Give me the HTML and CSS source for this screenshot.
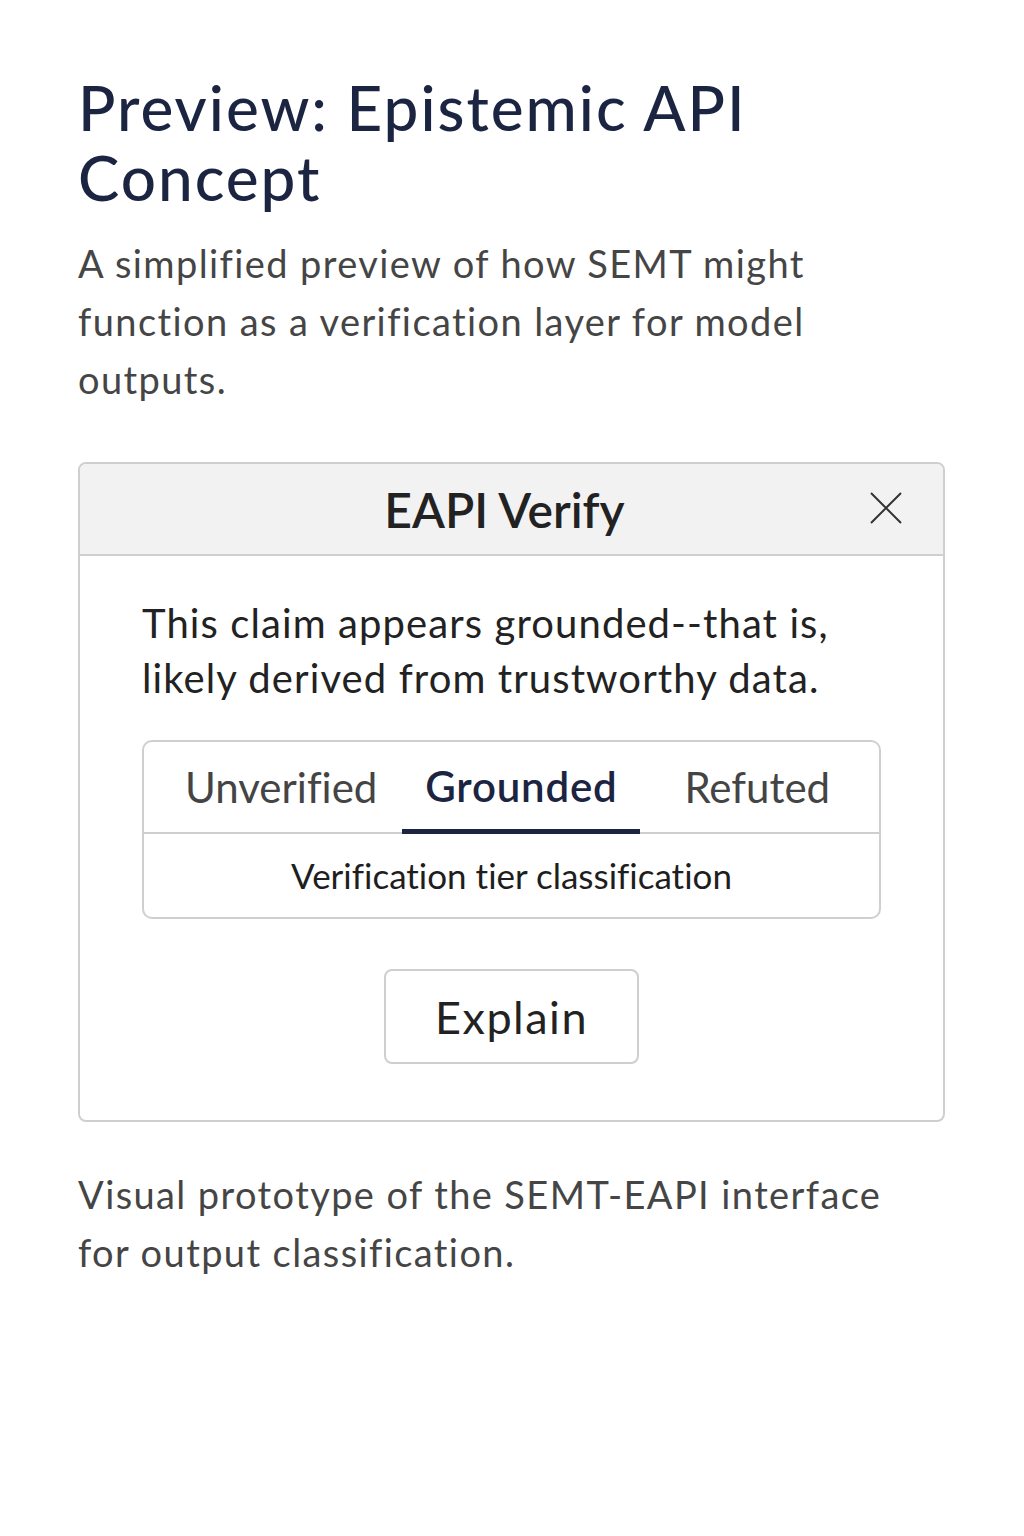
FILE: index.html
```html
<!DOCTYPE html>
<html lang="en">
<head>
<meta charset="utf-8">
<title>Preview: Epistemic API Concept</title>
<link rel="stylesheet" href="styles.css">
</head>
<body>
<main class="page">
  <h1 class="title">Preview: Epistemic API Concept</h1>
  <p class="lead">A simplified preview of how SEMT might function as a verification layer for model outputs.</p>

  <section class="card">
    <header class="card-header">
      <h2 class="card-title">EAPI Verify</h2>
      <button class="close" aria-label="Close">
        <svg width="34" height="34" viewBox="0 0 34 34"><path d="M2 2 L32 32 M32 2 L2 32" stroke="#333" stroke-width="2" fill="none"/></svg>
      </button>
    </header>
    <div class="card-body">
      <p class="claim">This claim appears grounded--that is, likely derived from trustworthy data.</p>
      <div class="tiers">
        <div class="tabs">
          <span class="tab">Unverified</span>
          <span class="tab active">Grounded</span>
          <span class="tab">Refuted</span>
        </div>
        <div class="tier-caption">Verification tier classification</div>
      </div>
      <div class="actions">
        <button class="btn">Explain</button>
      </div>
    </div>
  </section>

  <p class="footnote">Visual prototype of the SEMT-EAPI interface for output classification.</p>
</main>
</body>
</html>
```
FILE: styles.css
```css
* { box-sizing: border-box; }
html, body { margin: 0; padding: 0; background: #fff; }
body {
  font-family: Lato, "Open Sans", sans-serif;
  font-variant-ligatures: none;
}
.page { padding: 72px 0 0 78px; width: 945px; }
.title {
  margin: 0;
  font-size: 62px;
  line-height: 70px;
  font-weight: 500;
  letter-spacing: 2px;
  color: #1b2440;
  width: 760px;
}
.lead {
  margin: 22px 0 0;
  font-size: 38px;
  line-height: 58px;
  letter-spacing: 1.4px;
  color: #454545;
  width: 800px;
}
.card {
  margin-top: 54px;
  border: 2px solid #cfcfcf;
  border-radius: 8px;
  overflow: hidden;
}
.card-header {
  position: relative;
  height: 92px;
  background: #f2f2f2;
  border-bottom: 2px solid #cfcfcf;
  display: flex;
  align-items: center;
  justify-content: center;
}
.card-title {
  margin: 0 14px 0 0;
  font-size: 48px;
  font-weight: 600;
  color: #222;
}
.close {
  position: absolute;
  right: 40px;
  top: 27px;
  background: none;
  border: 0;
  padding: 0;
  width: 34px;
  height: 34px;
}
.card-body { padding: 40px 62px 56px 62px; }
.claim {
  margin: 0;
  font-size: 40px;
  line-height: 55px;
  letter-spacing: 1.1px;
  color: #222;
}
.tiers {
  margin-top: 34px;
  border: 2px solid #cfcfcf;
  border-radius: 10px;
}
.tabs {
  display: flex;
  height: 92px;
  border-bottom: 2px solid #cfcfcf;
  padding-left: 17px;
}
.tab {
  display: flex;
  align-items: center;
  justify-content: center;
  padding: 0 24px;
  font-size: 42px;
  color: #444;
}
.tab.active {
  width: 238px;
  color: #1b2440;
  font-weight: 600;
  letter-spacing: 0.8px;
  border-bottom: 5px solid #1b2440;
  margin-bottom: -2px;
  margin-left: 1px;
  margin-right: 20px;
}
.tier-caption {
  text-align: center;
  font-size: 35px;
  line-height: 83px;
  color: #1e1e1e;
}
.actions { display: flex; justify-content: center; margin-top: 50px; }
.btn {
  width: 255px;
  height: 95px;
  border: 2px solid #cfcfcf;
  border-radius: 8px;
  background: #fff;
  font-family: inherit;
  font-size: 45px;
  letter-spacing: 1.5px;
  color: #222;
}
.footnote {
  margin: 43px 0 0;
  font-size: 38px;
  line-height: 58px;
  letter-spacing: 1.4px;
  color: #454545;
  width: 820px;
}
```
